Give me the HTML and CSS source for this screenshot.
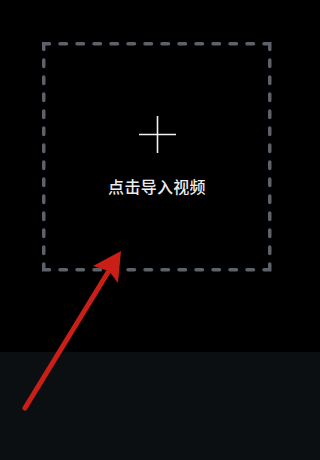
FILE: index.html
```html
<!DOCTYPE html>
<html lang="zh-CN">
<head>
<meta charset="utf-8">
<link rel="stylesheet" href="styles.css">
</head>
<body>
<div class="page">
  <div class="stage">
    <div class="picker">
      <svg class="dash" width="230" height="230" viewBox="0 0 230 230">
        <rect x="1.75" y="1.75" width="226" height="226" fill="none" stroke="#5c6268" stroke-width="3.5" stroke-linecap="round" stroke-dasharray="11.5 10.5 6.5 10.5 6.5 10.5 6.5 10.5 6.5 10.5 6.5 10.5 6.5 10.5 6.5 10.5 6.5 10.5 6.5 10.5 6.5 10.5 6.5 10.5 6.5 10.5" stroke-dashoffset="5.75"/>
      </svg>
      <svg class="plus" width="37" height="37" viewBox="0 0 37 37">
        <path d="M0 18.5H37M18.5 0V37" stroke="#f2f2f2" stroke-width="1.6" fill="none"/>
      </svg>
      <div class="label">点击导入视频</div>
    </div>
  </div>
  <div class="panel"></div>
  <svg class="arrow" width="307" height="460" viewBox="0 0 307 460">
    <path d="M25 408L110 269" stroke="#c91f17" stroke-width="5" stroke-linecap="round" fill="none"/>
    <path d="M121 251L93 266L109 271L118 283Z" fill="#c91f17"/>
  </svg>
</div>
</body>
</html>
```
FILE: styles.css
```css
html, body {
  margin: 0;
  padding: 0;
  background: #000;
}
.page {
  position: relative;
  height: 460px;
  display: flex;
  flex-direction: column;
  font-family: "Noto Sans CJK SC", "Noto Sans", sans-serif;
}
.stage {
  height: 352px;
  background: #000;
  padding: 42px 0 0 42px;
  box-sizing: border-box;
}
.picker {
  position: relative;
  width: 230px;
  height: 230px;
  display: flex;
  flex-direction: column;
  align-items: center;
  padding-top: 74px;
  box-sizing: border-box;
}
.dash {
  position: absolute;
  left: 0;
  top: 0;
}
.plus {
  display: block;
}
.label {
  margin-top: 23px;
  font-size: 16px;
  line-height: 20px;
  font-weight: 500;
  color: #ececec;
  letter-spacing: 0.3px;
}
.panel {
  flex: 1;
  background: #0c0f12;
}
.arrow {
  position: absolute;
  left: 0;
  top: 0;
  pointer-events: none;
}
```
